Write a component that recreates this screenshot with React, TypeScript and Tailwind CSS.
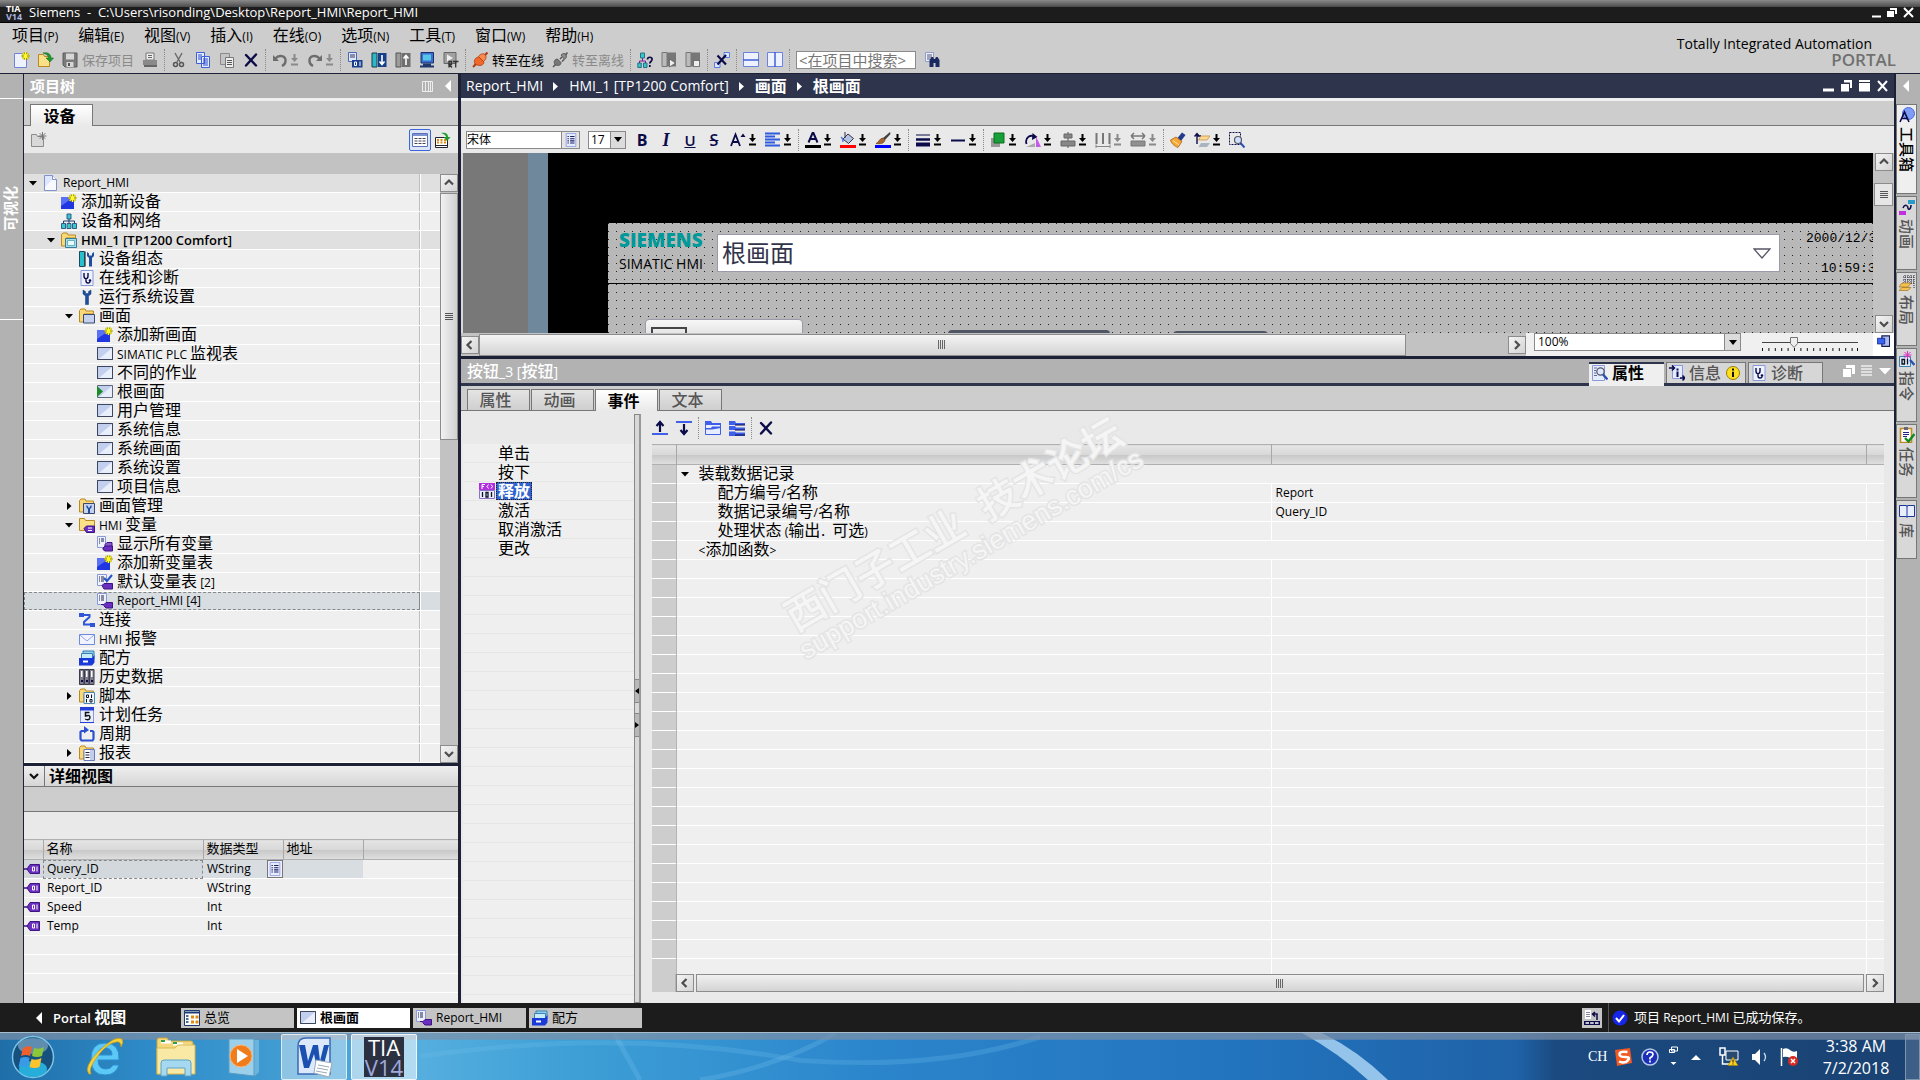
import type { ReactNode } from 'react'

const NAVY = '#0b0b4a'

const star = (
  <g>
    <path d="M11.500 0v8M7.500 4h8M8.700 1.200l5.600 5.600M14.300 1.200L8.700 6.800" stroke="#8a8410" strokeWidth="2" />
    <path d="M11.500 0v8M7.500 4h8M8.700 1.200l5.600 5.600M14.300 1.200L8.700 6.800" stroke="#fff82a" strokeWidth="1.200" />
  </g>
)

const folder = <path d="M.5 14V2.5L2 1h4l1 2h7.500v3H5v8z" fill="#f8d878" stroke="#b98a22" />

const tag = (
  <g>
    <path d="M8 8.500l2-2h5v5H8z" fill="#8a5ad0" stroke="#3c1580" />
    <path d="M6 12l2-2h7.500v5H8l-2-1.500z" fill="#6a2fc0" stroke="#3c1580" />
  </g>
)

const ICONS: Record<string, ReactNode> = {
  newProject: (
    <>
      <path d="M.5 1.500h8l4 4v10H.5z" fill="#eef2ff" stroke="#6f83d8" />
      {star}
    </>
  ),
  open: (
    <>
      <path d="M.5 14.500V2.500h5l1 2h5v10z" fill="#fbe08a" stroke="#b98a22" />
      <path d="M5 1c5-1 8 1 8 5h2.500L12 10 8 6h2.500C10.500 3 8 2 5 1z" fill="#1d9a2c" stroke="#0d5e18" strokeWidth=".5" />
    </>
  ),
  save: (
    <>
      <path d="M1 1h14v14H3l-2-2z" fill="#7b7b7b" stroke="#5d5d5d" />
      <path d="M4 1.500h8v6H4zM4.500 10h7v5h-7z" fill="#d6d6d6" />
      <path d="M6 11h2v3H6z" fill="#555" />
    </>
  ),
  print: (
    <>
      <path d="M4 1h8v7H4z" fill="#eee" stroke="#777" />
      <path d="M6 3.500h4M6 5.500h4" stroke="#666" />
      <path d="M1 8h14v5H1z" fill="#8a8a8a" />
      <path d="M2 13h13v2H2z" fill="#666" />
    </>
  ),
  cut: (
    <>
      <path d="M4 1l5 9M11 1L6 10" stroke="#6c6c6c" strokeWidth="1.500" fill="none" />
      <circle cx="4.500" cy="12.500" r="2" stroke="#555" strokeWidth="1.500" fill="none" />
      <circle cx="10.500" cy="12.500" r="2" stroke="#555" strokeWidth="1.500" fill="none" />
    </>
  ),
  copy: (
    <>
      <path d="M1.500.5h8v11h-8zM6.500 4.500h8v11h-8z" fill="#e6ecff" stroke="#3f5fd8" />
      <path d="M3 3h4M3 5h3M3 7h3M8 7h5M8 9h5M8 11h5M8 13h5" stroke="#2b48c8" />
    </>
  ),
  paste: (
    <>
      <path d="M1.500 1.500h9v11h-9z" fill="#c4c4c4" stroke="#8a8a8a" />
      <path d="M6.500 5.500h8v10h-8z" fill="#eee" stroke="#777" />
      <path d="M8 8.500h5M8 10.500h5M8 12.500h5" stroke="#555" />
    </>
  ),
  x: <path d="M3 3l10 10.500M13 2.500L3 13.500" stroke={NAVY} strokeWidth="2.400" strokeLinecap="round" />,
  undo: (
    <>
      <path d="M1 3v6h6z" fill="#6d6d6d" />
      <path d="M3.500 6.500C7 2 14 4 13.500 9c0 2-1.500 4-3.500 5" stroke="#6d6d6d" strokeWidth="2.400" fill="none" />
    </>
  ),
  redo: (
    <>
      <path d="M15 3v6H9z" fill="#6d6d6d" />
      <path d="M12.500 6.500C9 2 2 4 2.500 9c0 2 1.500 4 3.500 5" stroke="#6d6d6d" strokeWidth="2.400" fill="none" />
    </>
  ),
  compile: (
    <>
      <path d="M1.500.5h8v9h-8z" fill="#dfe8ff" stroke="#4767b8" />
      <path d="M3 3h5M3 5h5" stroke="#335" />
      <path d="M5 8h10.500v7.500H5z" fill="#1b3f8f" />
      <path d="M7.500 10v3.500h2V10zM13 9.500v4.500" stroke="#fff" fill="none" />
    </>
  ),
  download: (
    <>
      <path d="M1 1h5v14H1z" fill="#2bb9c9" stroke="#1a3a4a" />
      <path d="M7 1h8.500v14H7z" fill="#173f8a" />
      <path d="M11 3v9M8.500 9.500L11 12.500l2.500-3" stroke="#fff" strokeWidth="1.600" fill="none" />
    </>
  ),
  upload: (
    <>
      <path d="M1 1h5v14H1z" fill="#9c9c9c" stroke="#555" />
      <path d="M7 1h8.500v14H7z" fill="#6f6f6f" />
      <path d="M11 13V4M8.500 6.500L11 3.500l2.500 3" stroke="#fff" strokeWidth="1.600" fill="none" />
    </>
  ),
  simulate: (
    <>
      <path d="M2 .5h12.500v10.500H2z" fill="#3a6fd0" stroke="#17326e" />
      <path d="M4 2.500h8v6H4z" fill="#55c5e8" />
      <path d="M4 11.500h8v2H4zM1 13.500h14v2H1z" fill="#20376e" />
    </>
  ),
  runtime: (
    <>
      <path d="M1 .5h12v11H1z" fill="#a0a0a0" stroke="#666" />
      <path d="M4 2.500l6 3.500-6 3.500z" fill="#eee" />
      <path d="M6 15.500v-6h2.500v3H6l3 3M10 9.500h5.500M12.700 9.500v6" stroke="#333" strokeWidth="1.300" fill="none" />
    </>
  ),
  plug: (
    <>
      <path d="M1 15l3-3" stroke="#b03a10" strokeWidth="2" />
      <path d="M3 12c-2-4 1-7 4-7l5 5c0 3-4 5-9 2z" fill="#f0682a" stroke="#a83208" strokeWidth=".7" />
      <path d="M6.500 4.500C8 2 11 1 13 2.500c2 2 1 5-1.500 7z" fill="#f78a4c" stroke="#a83208" strokeWidth=".7" />
      <path d="M13 3l2.500-2.500" stroke="#b03a10" strokeWidth="2" />
    </>
  ),
  unplug: (
    <>
      <path d="M1 15l3-3M8 7l2-2M10 9.500l2-2" stroke="#555" strokeWidth="1.500" />
      <path d="M3 12.500C1 9.500 3 7 5.500 7L9 10.500c0 3-3 4-6 2z" fill="#777" stroke="#444" strokeWidth=".7" />
      <path d="M9 3c2-2 4-2 5-.5 1 1.500.5 3.500-1.500 5z" fill="#8c8c8c" stroke="#444" strokeWidth=".7" />
      <path d="M13.500 3L15.500.5" stroke="#555" strokeWidth="1.500" />
    </>
  ),
  accessible: (
    <>
      <path d="M3.500 1h4v5h-4z" fill="#35c5cf" stroke="#175e70" strokeWidth=".8" />
      <path d="M5.500 6v3M2.500 11V9h6v2" stroke="#7a1fa0" fill="none" />
      <path d="M.8 11h3.500v4.500H.8zM6.500 11H10v4.500H6.500z" fill="#35c5cf" stroke="#175e70" strokeWidth=".8" />
      <path d="M10.500 7.500c0-3 5-3 4.500 0 0 2-2.200 2-2.200 4M12.800 13v2" stroke={NAVY} strokeWidth="1.700" fill="none" />
    </>
  ),
  start: (
    <>
      <path d="M1 .5h5v14H1z" fill="#bbb" stroke="#777" />
      <path d="M6 .5h9v14H6z" fill="#777" />
      <path d="M8.500 7l6 4-6 4z" fill="#eee" stroke="#444" strokeWidth=".6" />
    </>
  ),
  stop: (
    <>
      <path d="M1 .5h5v14H1z" fill="#bbb" stroke="#777" />
      <path d="M6 .5h9v14H6z" fill="#777" />
      <path d="M8.500 8.500h6v6h-6z" fill="#eee" stroke="#444" strokeWidth=".6" />
    </>
  ),
  crossRef: (
    <>
      <path d="M10 .5h5.500v5H10zM.5 10.500H6v5H.5z" fill="#dfe6ff" stroke="#5a7be0" />
      <path d="M3.500 3.500l8.500 9M12 3L3.500 12.500" stroke={NAVY} strokeWidth="2.200" />
    </>
  ),
  splitH: (
    <>
      <path d="M.5.5h15v14H.5z" fill="#eef2ff" stroke="#6b83e0" />
      <path d="M0 8h16" stroke="#3f5fd8" strokeWidth="1.500" />
    </>
  ),
  splitV: (
    <>
      <path d="M.5.5h15v14H.5z" fill="#eef2ff" stroke="#6b83e0" />
      <path d="M8 0v15" stroke="#3f5fd8" strokeWidth="1.500" />
    </>
  ),
  find: (
    <>
      <path d="M1.500.5h8v9h-8z" fill="#eef2ff" stroke="#8d9ccc" />
      <path d="M3 3h5M3 5h5M3 7h3" stroke="#557" />
      <path d="M5.500 8l2-3h1.500l1 2h1l1-2h1.500l2 3v7h-4v-4h-2v4h-4z" fill="#1a2a60" />
    </>
  ),
  newFolder: (
    <>
      <path d="M.5 14.500V2.500h5l1 2h6v10z" fill="#d8d8d8" stroke="#8b8b8b" />
      <path d="M11.500 0v8M7.500 4h8M8.700 1.200l5.600 5.600M14.300 1.200L8.700 6.800" stroke="#777" />
    </>
  ),
  grid: (
    <>
      <path d="M.5 1.500h15v13H.5z" fill="#fff" stroke="#5b72b8" />
      <path d="M1 3h14" stroke="#7f92d0" strokeWidth="2" />
      <path d="M2.500 6.500h3M6.500 6.500h3M10.500 6.500h3M2.500 9h3M6.500 9h3M10.500 9h3M2.500 11.500h3M6.500 11.500h3M10.500 11.500h3" stroke="#445" />
    </>
  ),
  overview: (
    <>
      <path d="M.5 5.500h12v10H.5z" fill="#fff" stroke="#223" />
      <path d="M2 8h2M5.500 8h2M9 8h2M2 10.500h2M5.500 10.500h2M9 10.500h2" stroke="#e08a10" strokeWidth="2" />
      <path d="M1 13.500h11" stroke="#223" />
      <path d="M6 1c5-1 7 1 7 4h2.500L12 9 8.500 5H11C11 3 9 2 6 1z" fill="#1d9a2c" />
    </>
  ),
  page: (
    <>
      <path d="M1.500.5h8l4 4v11h-12z" fill="#dfe7ff" stroke="#7f93c8" />
      <path d="M2 12l9-9 2 2v10H2z" fill="#f8faff" />
      <path d="M9.500.5v4h4" fill="#fff" stroke="#7f93c8" />
    </>
  ),
  addNew: (
    <>
      <path d="M0 3h13v12H0z" fill="#2036e0" />
      <path d="M0 15V3h13L0 12z" fill="#5a70f5" />
      {star}
    </>
  ),
  network: (
    <>
      <path d="M6 1h4v5H6zM.5 10.500h4v5h-4zM6 10.500h4v5H6zM11.500 10.500h4v5h-4z" fill="#38c8cf" stroke="#1c3c6e" strokeWidth=".8" />
      <path d="M8 6v4M2.500 10V8h11v2" stroke="#1c3c6e" fill="none" />
    </>
  ),
  device: (
    <>
      {folder}
      <path d="M4.500 6.500h11v9h-11z" fill="#9fe0ea" stroke="#3a7a94" />
      <path d="M6.500 8.500h7v5h-7z" fill="#e8fbff" stroke="#6ab0c0" />
    </>
  ),
  config: (
    <>
      <path d="M.5.5h5v15h-5z" fill="#25c0cc" stroke="#20485a" />
      <path d="M6 .5h1v15H6z" fill="#777" />
      <path d="M8 1v4l2 2v8.500h3V7l2-2V1l-2 1.500v2h-3v-2z" fill="#1d4f9e" />
    </>
  ),
  diagnose: (
    <>
      <path d="M2 .5h12v15H2z" fill="#eef2ff" stroke="#8a9ad8" />
      <path d="M5 3v3c0 3.500 4 3.500 4 0V3M7 9v2c0 2.500 4 2.500 4 .5" stroke={NAVY} strokeWidth="1.400" fill="none" />
      <circle cx="11" cy="10.500" r="1.300" fill={NAVY} />
    </>
  ),
  wrench: <path d="M4 1v4l2.500 2v8.500h3V7L12 5V1L9.500 2.500v2h-3v-2z" fill="#1d4f9e" stroke="#123a78" strokeWidth=".5" />,
  screens: (
    <>
      {folder}
      <path d="M4.500 6.500h11v8.500h-11z" fill="#c4d2f0" stroke="#3a4a70" />
    </>
  ),
  screen: (
    <>
      <path d="M.5 1.500h15v12H.5z" fill="#c3cfee" stroke="#3c465e" />
      <path d="M15 2v11H2z" fill="#e9eefb" />
      <path d="M.5 1.500h15v12H.5z" stroke="#3c465e" />
    </>
  ),
  rootScreen: (
    <>
      <path d="M.5 1.500h15v12H.5z" fill="#c3cfee" />
      <path d="M15 2v11H2z" fill="#e9eefb" />
      <path d="M.5 1.500h15v12H.5z" stroke="#5c667e" />
      <path d="M0 2l6 5.500L0 13z" fill="#1d8a2c" />
    </>
  ),
  screenMgmt: (
    <>
      {folder}
      <path d="M4.500 5.500h11v10h-11z" fill="#c4d2f0" stroke="#3a4a70" />
      <path d="M7.500 7v2.500l1.500 1.500v4h2v-4l1.500-1.500V7L11 8.200v1.300H9V8.200z" fill="#1d4f9e" />
    </>
  ),
  tagFolder: (
    <>
      <path d="M.5 13.500V1.500h5l1 2h9v10z" fill="#fbe08a" stroke="#b98a22" />
      <path d="M5 11.500L7.500 9h8v6.500h-8z" fill="#6a2fc0" stroke="#3c1580" />
      <path d="M9 11h4M9 13.500h4" stroke="#fff" />
    </>
  ),
  tags: (
    <>
      <path d="M.5.5h8v11h-8z" fill="#eef2ff" stroke="#8a9ad8" />
      <path d="M2 3h1M4 3h3M2 5h1M4 5h3M2 7h1" stroke="#224" />
      {tag}
    </>
  ),
  tagDefault: (
    <>
      <path d="M.5.5h9v11h-9z" fill="#eef2ff" stroke="#8a9ad8" />
      <path d="M2 3h1M4 3h3M2 5h1M4 5h3M2 7h1M4 7h3" stroke="#224" />
      <path d="M7 4l3 3 5-6" stroke="#2450c8" strokeWidth="2" fill="none" />
      <path d="M5 11.500L7 9.500h8.500v5.500H7z" fill="#6a2fc0" stroke="#3c1580" />
    </>
  ),
  tagTable: (
    <>
      <path d="M.5.5h9v11h-9z" fill="#eef2ff" stroke="#8a9ad8" />
      <path d="M2 3h1M4 3h3M2 5h1M4 5h3M2 7h1M4 7h3" stroke="#224" />
      <path d="M4 11.500h3L9 9.500h6.500v5.500H9l-2-2" fill="#6a2fc0" stroke="#3c1580" />
    </>
  ),
  connection: (
    <>
      <path d="M0 1h5v4H0zM11 11h5v4h-5z" fill="#2f55d8" />
      <path d="M4 3h6.500v2L5 10v2.500h7" stroke="#2f55d8" strokeWidth="2" fill="none" />
    </>
  ),
  mail: (
    <>
      <path d="M.5 3.500h15v10H.5z" fill="#f1f4ff" stroke="#6c8ae0" />
      <path d="M1 4l7 6 7-6" stroke="#8fa6ea" fill="none" />
    </>
  ),
  recipe: (
    <>
      <path d="M4 1h11v8H4z" fill="#8fd0ee" stroke="#3a80b0" />
      <path d="M2.500 3.500h11V10h-11z" fill="#c6ecfa" stroke="#3a80b0" />
      <path d="M0 8h13l2.500-3v7.500L13 15.500H0z" fill="#1a3ad8" />
      <path d="M4 10.500h5v2H4z" fill="#fff" />
    </>
  ),
  history: (
    <>
      <path d="M.5.500h4.500v15H.5zM5.500.500H10v15H5.500zM10.500.500H15v15h-4.500z" fill="#7e7e8e" stroke="#3b3b4a" />
      <path d="M2 2h1.500v6H2zM7 2h1.500v6H7zM12 2h1.500v6H12z" fill="#fff" />
      <path d="M2 11h2v2H2zM7 11h2v2H7zM12 11h2v2h-2z" fill={NAVY} />
    </>
  ),
  script: (
    <>
      {folder}
      <path d="M5 4.500h10.500v11H5z" fill="#eef6ff" stroke="#4a88b0" />
      <path d="M7.500 7h2v2.500h-2zM12.500 6.500v3.500M7.500 11v3.500M11 11.500h2V14h-2z" stroke="#112" fill="none" />
    </>
  ),
  calendar: (
    <>
      <path d="M1.500.5h13v15h-13z" fill="#e9eeff" stroke="#8a9ad8" />
      <path d="M1 0h14v3.500H1zM1 15h14v1H1z" fill="#2440d8" />
      <path d="M10.500 5.500H6.500V9c4-1.500 5 0 4.200 2.500-.7 1.500-3 1.500-4.500.5" stroke="#111" strokeWidth="1.500" fill="none" />
    </>
  ),
  cycle: (
    <>
      <path d="M5 5H2.500L1.500 6v7l1 1.500h11l1-1.500V6l-1-1H11" stroke="#2b50d0" strokeWidth="2.200" fill="none" />
      <path d="M5 0l5 4-5 3.500z" fill="#2b50d0" />
    </>
  ),
  report: (
    <>
      {folder}
      <path d="M5 4.500h10.500v11H5z" fill="#fff" stroke="#6a7ac0" />
      <path d="M6.500 7.500h4M6.500 10h4M6.500 12.500h4" stroke="#224" />
      <path d="M12 5v10M14 5v10" stroke="#8a9ad8" />
    </>
  ),
  list: (
    <>
      <path d="M2.500.5h11v15h-11z" fill="#e6ecff" stroke="#8d9ee0" />
      <path d="M4 4h1.500M7 4h5M4 6.500h1.500M7 6.500h5M4 9h1.500M7 9h5M4 11.500h1.500M7 11.500h5" stroke="#1b1b5a" strokeWidth="1.200" />
    </>
  ),
  varTag: (
    <>
      <path d="M0 8h4" stroke="#3c1580" strokeWidth="1.500" />
      <path d="M3 8l3-4.500h9.500v9H6z" fill="#6a2fc0" stroke="#3c1580" />
      <path d="M8.500 6v4h2V6zM13 5.500v5" stroke="#fff" fill="none" />
    </>
  ),
  fontUp: (
    <>
      <path d="M1 14L5.500 2.500 10 14M2.800 10h5.400" stroke={NAVY} strokeWidth="1.800" fill="none" />
      <path d="M10.500 5L13 1.500 15.500 5z" fill={NAVY} />
    </>
  ),
  alignLeft: <path d="M0 1.500h15M0 4.500h10M0 7.500h15M0 10.500h10M0 13.500h15" stroke="#2f5be0" strokeWidth="1.800" />,
  fontColor: (
    <>
      <path d="M3.500 10.500L8 0l4.500 10.500M5 7h6" stroke={NAVY} strokeWidth="2" fill="none" />
      <path d="M0 13h16v3H0z" fill="#000" />
    </>
  ),
  fill: (
    <>
      <path d="M3 7l5-5 5.500 4.500-5 5z" fill="#b4c2e4" stroke="#334" />
      <path d="M5 0v6" stroke="#334" />
      <path d="M1 5c1 1 2 1 2 5" stroke="#5a7be0" strokeWidth="1.500" fill="none" />
      <path d="M0 13h16v3H0z" fill="#f00" />
    </>
  ),
  brushBlue: (
    <>
      <path d="M15 0L8 6l2 2 5.500-6z" fill="#444" />
      <path d="M8 6l2 2c-1 4-5 4-9 3.500 3-1 3-5 7-5.500z" fill="#a5642c" stroke="#5a2f0c" strokeWidth=".6" />
      <path d="M0 13h16v3H0z" fill="#00f" />
    </>
  ),
  lineWidth: (
    <>
      <path d="M1 3h14" stroke={NAVY} strokeWidth="1" />
      <path d="M1 7.500h14" stroke={NAVY} strokeWidth="2.500" />
      <path d="M1 12.500h14" stroke={NAVY} strokeWidth="4" />
    </>
  ),
  line: <path d="M1 8.500h14" stroke={NAVY} strokeWidth="2" />,
  order: (
    <>
      <path d="M1 6h9v9H1z" fill="#999" />
      <path d="M4 1h10v10H4z" fill="#18a038" stroke="#0c6a20" />
    </>
  ),
  rotate: (
    <>
      <path d="M1.500 12C-.5 5 6 2 10 5" stroke={NAVY} strokeWidth="1.800" fill="none" />
      <path d="M7.500 1l5 4-5.500 3z" fill={NAVY} />
      <path d="M11 4.500V15h5z" fill="#c65ae8" />
      <path d="M1 15l9-4v4z" fill="#aaa" />
    </>
  ),
  center: (
    <>
      <path d="M8 0v16" stroke="#555" />
      <path d="M4 2h8v4H4zM1 9h14v5H1z" fill="#868686" stroke="#666" />
    </>
  ),
  distribute: (
    <>
      <path d="M1.500 1v11M8 1v11M14.500 1v11" stroke="#777" strokeWidth="2" />
      <path d="M1 14.500h14M1 12.500v3.500M15 12.500v3.500" stroke="#888" />
    </>
  ),
  sameWidth: (
    <>
      <path d="M1 4h14M1 4l3-3M1 4l3 3M15 4l-3-3M15 4l-3 3" stroke="#777" strokeWidth="1.500" fill="none" />
      <path d="M1 9h14v5H1z" fill="#909090" stroke="#777" />
    </>
  ),
  formatBrush: (
    <>
      <path d="M12 .5L15.500 3 11 9 7.500 6z" fill="#243a8c" />
      <path d="M6 5l6 4.500L8 15.500C4 14 1 11 .5 8z" fill="#f4a836" stroke="#a05a10" strokeWidth=".7" />
      <path d="M3 8.500l6 4.500" stroke="#fce0a0" />
    </>
  ),
  layerUp: (
    <>
      <path d="M3 12V2M.5 4.500L3 1.500l2.500 3M3 4h4" stroke={NAVY} strokeWidth="1.400" fill="none" />
      <path d="M7 4h9l-3 4H4.500z" fill="#fbd89a" stroke="#c48a30" strokeWidth=".7" />
      <path d="M7 11h9l-3 4H4.500z" fill="#a9b4c0" />
    </>
  ),
  zoomSel: (
    <>
      <path d="M.5.5h11v12H.5z" fill="none" stroke={NAVY} strokeDasharray="2 1" />
      <circle cx="9" cy="8" r="3.500" fill="#cfe0ff" stroke="#556" strokeWidth="1.200" />
      <path d="M11.500 11l4 4.500" stroke="#2b50b0" strokeWidth="2" />
    </>
  ),
  moveUp: (
    <>
      <path d="M8 12V3M4.500 6L8 2l3.500 4" stroke={NAVY} strokeWidth="2.200" fill="none" />
      <path d="M0 14h16" stroke="#3f5fe8" strokeWidth="2" />
    </>
  ),
  moveDown: (
    <>
      <path d="M8 4v9M4.500 10L8 14l3.500-4" stroke={NAVY} strokeWidth="2.200" fill="none" />
      <path d="M0 2h16" stroke="#3f5fe8" strokeWidth="2" />
    </>
  ),
  groupA: (
    <>
      <path d="M.5 14.500V1.500h5l1 2h9v11z" fill="#e8edff" stroke="#3f5fe8" />
      <path d="M0 1h6l1 2h9v2H0zM0 8h6l1-1.500h9v1.500L7 9.500H0z" fill="#3f5fe8" />
    </>
  ),
  groupB: (
    <>
      <path d="M0 1h6l1 2h9v2H0zM0 6h6l1 1.500h9V10H0zM0 11.500h6l1 1h9V16H0z" fill="#3f5fe8" />
      <path d="M6 5h10M6 10h10M6 15h10" stroke={NAVY} />
    </>
  ),
  event: (
    <>
      <path d="M0 0h16v7H0z" fill="#b030e0" />
      <path d="M3 6V1.500h3M3 3.500h2M9.500 1.500l-1.500 2 1.500 2M12 1.500l1.500 2-1.500 2" stroke="#fff" fill="none" />
      <path d="M.5 7.500h15v8H.5z" fill="#e8edff" stroke="#8a70c0" />
      <path d="M3.500 9v5M7 9.500h2V14H7zM12.500 9v5" stroke="#112" strokeWidth="1.300" fill="none" />
    </>
  ),
  props: (
    <>
      <path d="M.5.5h12v15H.5z" fill="#e6ecff" stroke="#8a9ad8" />
      <path d="M2 3h3M2 5.500h2M2 8h2M2 10.500h3" stroke="#668" />
      <circle cx="8.500" cy="6.500" r="3.700" fill="#dce8ff" stroke="#556" strokeWidth="1.300" />
      <path d="M11 9.500l4.500 5" stroke="#2b50b0" strokeWidth="2.400" />
    </>
  ),
  info: (
    <>
      <path d="M3.500.5h10v13h-10z" fill="#e6ecff" stroke="#8a9ad8" />
      <path d="M0 3h5M3 .5L5.500 3 3 5.500M16 13h-5M13.500 10.500L16 13l-2.500 2.500" stroke={NAVY} strokeWidth="1.500" fill="none" />
      <path d="M8.500 3.500v2M8.500 6.500V12" stroke={NAVY} strokeWidth="2" />
    </>
  ),
  infoYellow: (
    <>
      <circle cx="8" cy="8" r="6.500" fill="#ffe020" stroke="#9a8000" />
      <path d="M8 3.500v2M8 6.800v5.200" stroke="#111" strokeWidth="2" />
    </>
  ),
  toolbox: (
    <>
      <circle cx="9.500" cy="6.500" r="6" fill="#7f9df5" stroke="#4a6ae0" />
      <path d="M1 15L5.500 5 10 15M2.800 11.500h5.400" stroke={NAVY} strokeWidth="1.600" fill="none" />
    </>
  ),
  animation: (
    <>
      <path d="M9 1h7v4H9z" fill="#2a9ac8" />
      <path d="M0 12h7v4H0z" fill="#c030e0" />
      <path d="M4 9c2-5 5-2 5 0s3 2 3-3" stroke={NAVY} strokeWidth="1.500" fill="none" />
    </>
  ),
  layout: (
    <>
      <path d="M4 2h12M4 5h12M4 8h12M6 0v10M9 0v10M12 0v10M15 0v14" stroke="#223" strokeDasharray="1 1" />
      <path d="M0 12l3-4h9l-3 4zM0 15.500l3-3h9l-3 3z" fill="#f4c050" stroke="#9a6a10" strokeWidth=".6" />
    </>
  ),
  instructions: (
    <>
      <path d="M.5 5.500h11v10H.5z" fill="#dcecff" stroke="#3a80b0" />
      <path d="M3 8.500h2.500V13H3zM8.500 8v5.500" stroke="#111" strokeWidth="1.300" fill="none" />
      <path d="M8.500 0v8M4.500 4h8M5.500 1l6 6M11.500 1l-6 6" stroke="#e030c0" />
      <path d="M11 9l4.500 5" stroke="#2b50b0" strokeWidth="2.400" />
    </>
  ),
  tasks: (
    <>
      <path d="M1.500 1.500h11v14h-11z" fill="#fff" stroke="#c08a20" strokeWidth="1.600" />
      <path d="M5 0h4v3H5z" fill="#667" />
      <path d="M4 5.500h6M4 7.500h6M4 9.500h4" stroke="#228" />
      <path d="M6 11l3.500 3.500L15.500 7" stroke="#128a20" strokeWidth="2.400" fill="none" />
    </>
  ),
  book: (
    <>
      <path d="M.5 2.500h7l.5 1 .5-1h7v11h-7l-.5 1-.5-1h-7z" fill="#e9eeff" stroke="#1a3a9a" />
      <path d="M8 3v11" stroke="#1a3a9a" />
    </>
  ),
  portalOverview: (
    <>
      <path d="M.5.5h15v15H.5z" fill="#fff" stroke="#1a3a70" />
      <path d="M1 2.500h14" stroke="#1a3a70" strokeWidth="2" />
      <path d="M2 6h2.500M2 9h2.500M2 12h2.500" stroke="#1a3a70" strokeWidth="1.500" />
      <path d="M7 7h3M11.500 7h3M7 12h3M11.500 12h3" stroke="#e08a10" strokeWidth="3" />
    </>
  ),
  editors: (
    <>
      <path d="M1 0h6v9H1z" fill="#fff" />
      <path d="M2 2.500h4M2 4.500h4M2 6.500h4" stroke="#88a" />
      <path d="M9 4h4v6M11 2L8.500 4l2.500 2.500" stroke={NAVY} strokeWidth="1.500" fill="none" />
      <path d="M0 11h16v4H0z" fill={NAVY} />
      <path d="M1.500 13h3.500M6.200 13h3.500M11 13h3.500" stroke="#fff" strokeWidth="1.500" />
    </>
  ),
  ok: (
    <>
      <circle cx="8" cy="8" r="7.500" fill="#1526e8" />
      <path d="M4 8l3 3.500L12 5" stroke="#fff" strokeWidth="2" fill="none" />
    </>
  ),
  layers: (
    <>
      <path d="M6 1h9.500v13H6z" fill="#aebcf0" stroke="#141e50" strokeWidth="1.500" />
      <path d="M.5 4h9v7h-9z" fill="#3565f0" stroke="#141e90" />
    </>
  ),
}

function Icon({ name, size = 16 }: { name: string; size?: number }) {
  return (
    <svg viewBox="0 0 16 16" width={size} height={size} fill="none" className="shrink-0">
      {ICONS[name]}
    </svg>
  )
}

// Chinese runs are set larger than the Latin text beside them
function Txt({ children, small }: { children: string; small?: boolean }) {
  const parts = children.split(/([\u3000-\u9fff]+)/).filter(Boolean)
  return (
    <span className="whitespace-pre">
      {parts.map((p, i) => (
        <span key={i} className={/[\u3000-\u9fff]/.test(p) ? (small ? 'text-[13px]' : 'text-[16px]') : ''}>
          {p}
        </span>
      ))}
    </span>
  )
}

const Sep = () => <span className="-mx-0.5 h-[22px] border-l border-dotted border-[#8a8a8a]" />

function ToolButton({ icon, label, disabled }: { icon: string; label?: string; disabled?: boolean }) {
  return (
    <button aria-label={label ? undefined : icon} className="flex items-center gap-1 shrink-0">
      <Icon name={icon} />
      {label && <span className={disabled ? 'text-[13px] text-[#8a8a8a]' : 'text-[13px]'}>{label}</span>}
    </button>
  )
}

function DropMark({ color = '#000' }: { color?: string }) {
  return (
    <svg viewBox="0 0 9 12" width="9" height="12" className="shrink-0">
      <path d="M3.500 0h2v4H8L4.500 8 1 4h2.500zM1 9.500h7v2H1z" fill={color} />
    </svg>
  )
}

function DropButton({ icon, disabled }: { icon: string; disabled?: boolean }) {
  return (
    <button aria-label={icon} className="flex items-center gap-0.5 shrink-0">
      <Icon name={icon} />
      <DropMark color={disabled ? '#8a8a8a' : '#000'} />
    </button>
  )
}

const chevrons = {
  up: 'M2 7.500l4-4 4 4',
  down: 'M2 4l4 4 4-4',
  left: 'M7.500 2l-4 4 4 4',
  right: 'M4 2l4 4-4 4',
}

function ScrollButton({ dir }: { dir: keyof typeof chevrons }) {
  return (
    <button
      aria-label={dir}
      className="flex size-[18px] shrink-0 items-center justify-center border border-[#8c8c8c] bg-linear-to-br from-[#f4f4f4] to-[#d4d4d4]"
    >
      <svg viewBox="0 0 12 12" width="12" height="12">
        <path d={chevrons[dir]} fill="none" stroke="#4c4c4c" strokeWidth="2.200" />
      </svg>
    </button>
  )
}

const GripH = () => (
  <svg viewBox="0 0 8 9" width="8" height="9">
    <path d="M.5 0v9M2.500 0v9M4.500 0v9M6.500 0v9" stroke="#666" />
  </svg>
)

const GripV = () => (
  <svg viewBox="0 0 8 8" width="8" height="8">
    <path d="M0 .5h8M0 2.500h8M0 4.500h8M0 6.500h8" stroke="#555" />
  </svg>
)

type Node = { lv: number; icon: string; text: string; arrow?: 'open' | 'closed'; head?: boolean; selected?: boolean }

const TREE: Node[] = [
  { lv: 0, icon: 'page', text: 'Report_HMI', arrow: 'open', head: true },
  { lv: 1, icon: 'addNew', text: '添加新设备' },
  { lv: 1, icon: 'network', text: '设备和网络' },
  { lv: 1, icon: 'device', text: 'HMI_1 [TP1200 Comfort]', arrow: 'open', head: true },
  { lv: 2, icon: 'config', text: '设备组态' },
  { lv: 2, icon: 'diagnose', text: '在线和诊断' },
  { lv: 2, icon: 'wrench', text: '运行系统设置' },
  { lv: 2, icon: 'screens', text: '画面', arrow: 'open' },
  { lv: 3, icon: 'addNew', text: '添加新画面' },
  { lv: 3, icon: 'screen', text: 'SIMATIC PLC 监视表' },
  { lv: 3, icon: 'screen', text: '不同的作业' },
  { lv: 3, icon: 'rootScreen', text: '根画面' },
  { lv: 3, icon: 'screen', text: '用户管理' },
  { lv: 3, icon: 'screen', text: '系统信息' },
  { lv: 3, icon: 'screen', text: '系统画面' },
  { lv: 3, icon: 'screen', text: '系统设置' },
  { lv: 3, icon: 'screen', text: '项目信息' },
  { lv: 2, icon: 'screenMgmt', text: '画面管理', arrow: 'closed' },
  { lv: 2, icon: 'tagFolder', text: 'HMI 变量', arrow: 'open' },
  { lv: 3, icon: 'tags', text: '显示所有变量' },
  { lv: 3, icon: 'addNew', text: '添加新变量表' },
  { lv: 3, icon: 'tagDefault', text: '默认变量表 [2]' },
  { lv: 3, icon: 'tagTable', text: 'Report_HMI [4]', selected: true },
  { lv: 2, icon: 'connection', text: '连接' },
  { lv: 2, icon: 'mail', text: 'HMI 报警' },
  { lv: 2, icon: 'recipe', text: '配方' },
  { lv: 2, icon: 'history', text: '历史数据' },
  { lv: 2, icon: 'script', text: '脚本', arrow: 'closed' },
  { lv: 2, icon: 'calendar', text: '计划任务' },
  { lv: 2, icon: 'cycle', text: '周期' },
  { lv: 2, icon: 'report', text: '报表', arrow: 'closed' },
]

const MENU = ['项目(P)', '编辑(E)', '视图(V)', '插入(I)', '在线(O)', '选项(N)', '工具(T)', '窗口(W)', '帮助(H)']

const DETAILS = [
  ['Query_ID', 'WString'],
  ['Report_ID', 'WString'],
  ['Speed', 'Int'],
  ['Temp', 'Int'],
]

const EVENTS = ['单击', '按下', '释放', '激活', '取消激活', '更改']

const FUNCS = [
  { text: '装载数据记录', value: '', level: 0, open: true },
  { text: '配方编号/名称', value: 'Report', level: 1 },
  { text: '数据记录编号/名称', value: 'Query_ID', level: 1 },
  { text: '处理状态 (输出．可选)', value: '', level: 1 },
  { text: '<添加函数>', value: '', level: 0 },
]

function Arrow({ state }: { state?: 'open' | 'closed' }) {
  return (
    <svg viewBox="0 0 12 12" width="12" height="12" className="shrink-0">
      {state === 'open' && <path d="M2 4h8L6 8.500z" />}
      {state === 'closed' && <path d="M4 2l4.500 4L4 10z" />}
    </svg>
  )
}

function TitleBar() {
  return (
    <header className="flex h-[23px] shrink-0 items-end border-b border-black bg-[linear-gradient(#8a8a8a,#4a4a4a_7px,#1c1c1c_7px)] pl-1.5 text-white">
      <div className="flex h-[17px] w-[17px] flex-col text-[9px] leading-[8px] font-bold">
        <span>TIA</span>
        <span className="text-[#a9b4e0]">V14</span>
      </div>
      <h1 className="flex-1 pl-1.5 text-[13px] leading-5">
        Siemens&nbsp; -&nbsp; C:\Users\risonding\Desktop\Report_HMI\Report_HMI
      </h1>
      <div className="flex items-center gap-1.5 pr-1.5 pb-1">
        <button aria-label="Minimize"><svg width="10" height="11"><path d="M1 9.500h9" stroke="#fff" strokeWidth="2" /></svg></button>
        <button aria-label="Restore"><svg width="10" height="11"><path d="M0 4h7v6H0zM3 1h7v6H8V3H3z" fill="#fff" /></svg></button>
        <button aria-label="Close"><svg width="11" height="11"><path d="M1 1l9 9M10 1l-9 9" stroke="#fff" strokeWidth="2" /></svg></button>
      </div>
    </header>
  )
}

function MenuAndToolbar() {
  return (
    <div className="flex h-[51px] shrink-0 border-b border-[#1c2138] bg-[#cdcdcd]">
      <div className="flex-1">
        <nav className="flex h-[26px] items-center gap-5 pl-3">
          {MENU.map((m) => (
            <button key={m}><Txt>{m}</Txt></button>
          ))}
        </nav>
        <div className="flex h-[22px] items-center gap-2 pl-3.5">
          <ToolButton icon="newProject" />
          <ToolButton icon="open" />
          <ToolButton icon="save" label="保存项目" disabled />
          <ToolButton icon="print" />
          <Sep />
          <ToolButton icon="cut" />
          <ToolButton icon="copy" />
          <ToolButton icon="paste" />
          <ToolButton icon="x" />
          <Sep />
          <DropButton icon="undo" disabled />
          <DropButton icon="redo" disabled />
          <Sep />
          <ToolButton icon="compile" />
          <ToolButton icon="download" />
          <ToolButton icon="upload" />
          <ToolButton icon="simulate" />
          <ToolButton icon="runtime" />
          <Sep />
          <ToolButton icon="plug" label="转至在线" />
          <ToolButton icon="unplug" label="转至离线" disabled />
          <Sep />
          <ToolButton icon="accessible" />
          <ToolButton icon="start" />
          <ToolButton icon="stop" />
          <Sep />
          <ToolButton icon="crossRef" />
          <Sep />
          <ToolButton icon="splitH" />
          <ToolButton icon="splitV" />
          <Sep />
          <input
            aria-label="在项目中搜索"
            placeholder="<在项目中搜索>"
            className="h-[18px] w-[120px] border border-[#8a8a8a] bg-white px-0.5 text-[15px] leading-4 placeholder:text-[#777]"
          />
          <ToolButton icon="find" />
        </div>
      </div>
      <div className="pt-[11px] pr-6 text-right">
        <div className="pr-6 text-[14px] leading-5 font-medium">Totally Integrated Automation</div>
        <div className="-mt-1 text-[17px] leading-5 font-semibold text-[#707070]">PORTAL</div>
      </div>
    </div>
  )
}

function ProjectTree() {
  return (
    <aside className="flex w-[434px] shrink-0 flex-col bg-[#efefef]">
      <div className="flex h-6 shrink-0 items-center bg-[#b2b2b2] px-1.5 text-white">
        <h2 className="flex-1 text-[15px] font-bold">项目树</h2>
        <svg width="12" height="11" className="mr-2.5"><path d="M.5.500h10v10H.5zM3.500 0v10M6.500 0v10M8.500 0v10" stroke="#eee" fill="none" /></svg>
        <button aria-label="Collapse"><svg width="8" height="12"><path d="M7 0v12L1 6z" fill="#fff" /></svg></button>
      </div>
      <div className="h-[3px] shrink-0 bg-[#f0f0f0]" />
      <div className="flex h-[25px] shrink-0 items-end border-b border-[#777] bg-[#cdcdcd] pl-1.5">
        <button className="-mb-px h-[22px] w-[63px] border border-b-0 border-[#777] bg-linear-to-b from-white to-[#e9e9e9] pr-1 text-[16px] leading-[18px] font-semibold">
          设备
        </button>
      </div>
      <div className="flex h-[27px] shrink-0 items-center justify-between bg-[#e9e9e9] px-[7px]">
        <ToolButton icon="newFolder" />
        <div className="flex items-center gap-1">
          <button aria-label="Details" className="flex size-[22px] items-center justify-center rounded-xs border border-[#3a66d8] bg-[#dfe6fa]">
            <Icon name="grid" />
          </button>
          <ToolButton icon="overview" />
        </div>
      </div>
      <div className="h-[21px] shrink-0 bg-[#c2c2c2]" />
      <div className="flex shrink-0 bg-[#c2c2c2]">
        <ul className="flex-1">
          {TREE.map((n, i) => (
            <li
              key={i}
              className={
                'flex h-[19px] border-b border-white ' +
                (n.selected ? 'bg-[#d8dde2]' : n.head ? 'bg-[#e0e0e0]' : 'bg-[#efefef]')
              }
            >
              <div
                style={{ paddingLeft: 3 + n.lv * 18 }}
                className={
                  'flex flex-1 items-center gap-1 border-r ' +
                  (n.selected ? 'outline-1 -outline-offset-1 outline-dashed outline-[#888] border-[#888]' : 'border-[#bdbdbd]')
                }
              >
                <Arrow state={n.arrow} />
                <Icon name={n.icon} />
                <span className={n.lv === 1 && n.head ? 'text-[13px] font-semibold' : ''}>
                  <Txt>{n.text}</Txt>
                </span>
              </div>
              <div className="w-5 border-l border-white" />
            </li>
          ))}
        </ul>
        <div className="flex w-[18px] flex-col bg-[#c2c2c2]">
          <ScrollButton dir="up" />
          <div className="mt-px flex h-[247px] items-center justify-center border border-[#8c8c8c] bg-linear-to-r from-[#f2f2f2] to-[#d0d0d0]">
            <GripV />
          </div>
          <div className="flex-1" />
          <ScrollButton dir="down" />
        </div>
      </div>
      <div className="h-[3px] shrink-0 bg-[#1c2138]" />
      <div className="flex h-[21px] shrink-0 items-center border-b border-[#777] bg-linear-to-b from-[#efefef] to-[#d6d6d6]">
        <button aria-label="Toggle details" className="flex h-full w-[21px] items-center justify-center border-r border-[#777]">
          <svg width="10" height="7"><path d="M1 1l4 4 4-4" fill="none" stroke="#111" strokeWidth="2.200" /></svg>
        </button>
        <h2 className="pl-1 text-[16px] leading-5 font-bold">详细视图</h2>
      </div>
      <div className="h-[25px] shrink-0 border-b border-[#777] bg-[#cdcdcd]" />
      <div className="h-[27px] shrink-0 bg-[#e9e9e9]" />
      <div className="min-h-0 flex-1 overflow-hidden">
        <table className="w-full table-fixed border-collapse text-left">
          <colgroup>
            <col className="w-[19px]" />
            <col className="w-[160px]" />
            <col className="w-[80px]" />
            <col className="w-[80px]" />
            <col />
          </colgroup>
          <thead>
            <tr className="h-5 border-y border-[#b0b0b0] bg-[linear-gradient(#e4e4e4,#d8d8d8_50%,#c8c8c8_50%,#dedede)] align-top">
              <th className="border-r border-[#a8a8a8]" />
              <th className="border-r border-[#a8a8a8] pl-[3px] text-[13px] leading-4 font-normal">名称</th>
              <th className="border-r border-[#a8a8a8] pl-[3px] text-[13px] leading-4 font-normal">数据类型</th>
              <th className="border-r border-[#a8a8a8] pl-[3px] text-[13px] leading-4 font-normal">地址</th>
              <th />
            </tr>
          </thead>
          <tbody>
            {DETAILS.map(([name, type], i) => (
              <tr key={name} className="h-[19px] border-b border-white leading-[18px]">
                <td className={i === 0 ? 'bg-[#d3d8dc]' : ''}><Icon name="varTag" /></td>
                <td className={i === 0 ? 'bg-[#d3d8dc] pl-1 outline-1 -outline-offset-1 outline-dashed outline-[#888]' : 'pl-1'}>{name}</td>
                <td className={i === 0 ? 'bg-[#d8dde2] pl-1' : 'pl-1'}>
                  <div className="flex items-center justify-between">
                    {type}
                    {i === 0 && (
                      <button aria-label="Select type" className="flex h-[18px] w-4 items-center justify-center border border-[#777] bg-[#eef]">
                        <Icon name="list" size={14} />
                      </button>
                    )}
                  </div>
                </td>
                <td className={i === 0 ? 'bg-[#d8dde2]' : ''} />
                <td />
              </tr>
            ))}
            {Array.from({ length: 4 }, (_, i) => (
              <tr key={i} className="h-[19px] border-b border-white"><td colSpan={5} /></tr>
            ))}
          </tbody>
        </table>
      </div>
    </aside>
  )
}

function Crumbs() {
  return (
    <div className="flex h-6 shrink-0 items-center bg-[#2d344c] pr-1.5 pl-[5px] text-white">
      <nav className="flex flex-1 items-center gap-2 text-[14px] font-medium">
        {['Report_HMI', 'HMI_1 [TP1200 Comfort]', '画面', '根画面'].map((c, i) => (
          <span key={c} className="flex items-center gap-2">
            {i > 0 && <svg width="10" height="9"><path d="M2 0l5 4.500L2 9z" fill="#fff" /></svg>}
            <a href="#" className={i > 1 ? 'font-bold' : ''}><Txt>{c}</Txt></a>
          </span>
        ))}
      </nav>
      <div className="flex gap-[7px]">
        <button aria-label="Minimize"><svg width="11" height="12"><path d="M0 10h11" stroke="#fff" strokeWidth="3" /></svg></button>
        <button aria-label="Restore"><svg width="11" height="12"><path d="M0 4h8v7.500H0zM3 0h8v8H9V2.500H3z" fill="#fff" /></svg></button>
        <button aria-label="Maximize"><svg width="11" height="12"><path d="M0 0h11v2H0zM0 3h11v8.500H0z" fill="#fff" /></svg></button>
        <button aria-label="Close"><svg width="11" height="12"><path d="M1 1l9 10M10 1L1 11" stroke="#fff" strokeWidth="2" /></svg></button>
      </div>
    </div>
  )
}

function FormatToolbar() {
  return (
    <div className="flex h-[27px] shrink-0 items-center gap-2 bg-[#e9e9e9] pl-[5px]">
      <div className="flex h-[18px] border border-[#8a8a8a]">
        <input aria-label="Font" defaultValue="宋体" className="w-[94px] bg-white text-[12px]" />
        <button aria-label="Fonts" className="flex w-[18px] items-center justify-center border-l border-[#8a8a8a] bg-[#e4e4e4]">
          <Icon name="list" size={14} />
        </button>
      </div>
      <div className="relative flex h-[18px] border border-[#8a8a8a]">
        <select aria-label="Font size" className="w-9 appearance-none bg-white pl-0.5 text-[12px] leading-4">
          <option>17</option>
        </select>
        <span className="pointer-events-none absolute inset-y-0 right-0 flex w-[15px] items-center justify-center border-l border-[#8a8a8a] bg-[#dcdcdc]">
          <svg width="8" height="5"><path d="M0 0h8L4 5z" /></svg>
        </span>
      </div>
      <button className="w-4 text-[16px] leading-4 font-bold text-[#0b0b4a]">B</button>
      <button className="w-4 font-['Liberation_Serif'] text-[18px] leading-4 font-bold text-[#0b0b4a] italic">I</button>
      <button className="w-4 text-[15px] leading-4 font-semibold text-[#0b0b4a] underline">U</button>
      <button className="w-4 text-[16px] leading-4 font-semibold text-[#0b0b4a] line-through">S</button>
      <DropButton icon="fontUp" />
      <DropButton icon="alignLeft" />
      <Sep />
      <DropButton icon="fontColor" />
      <DropButton icon="fill" />
      <DropButton icon="brushBlue" />
      <Sep />
      <DropButton icon="lineWidth" />
      <DropButton icon="line" />
      <Sep />
      <DropButton icon="order" />
      <DropButton icon="rotate" />
      <DropButton icon="center" />
      <DropButton icon="distribute" disabled />
      <DropButton icon="sameWidth" disabled />
      <Sep />
      <ToolButton icon="formatBrush" />
      <DropButton icon="layerUp" />
      <ToolButton icon="zoomSel" />
    </div>
  )
}

// Device screen with its 8px snap grid, shown clipped by the editor viewport
function Canvas() {
  return (
    <div className="flex h-[180px] shrink-0">
      <div className="w-0.5 bg-[#d8d8d8]" />
      <div className="w-[65px] bg-[#787878]" />
      <div className="w-5 bg-[#70889b]" />
      <div className="relative min-w-0 flex-1 overflow-hidden bg-black">
        <div className="absolute top-[70px] right-0 bottom-0 left-[60px] bg-[#b8b8b8]">
          <div className="relative h-[60px] bg-[conic-gradient(at_1px_1px,transparent_75%,#222_0)] bg-size-[8px_8px]">
            <div className="absolute top-[5px] left-[11px] text-[19px] leading-6 font-extrabold text-[#009999]">SIEMENS</div>
            <div className="absolute top-[31px] left-[11px] text-[14px] leading-5">SIMATIC HMI</div>
            <div className="absolute top-[11px] right-[93px] left-[109px] flex h-[38px] items-center justify-between border border-[#9a9aaa] bg-white pr-2 pl-1">
              <span className="text-[24px] leading-8 text-[#31344a]">根画面</span>
              <svg width="18" height="11"><path d="M1 1h16L9 10z" fill="none" stroke="#556" strokeWidth="1.300" /></svg>
            </div>
            <div className="absolute top-[6px] left-[1198px] font-['Liberation_Mono'] text-[13px] leading-5 whitespace-nowrap">2000/12/31</div>
            <div className="absolute top-[36px] left-[1213px] font-['Liberation_Mono'] text-[13px] leading-5 whitespace-nowrap">10:59:39</div>
          </div>
          <div className="relative h-[52px] border-t border-black bg-[conic-gradient(at_1px_1px,transparent_75%,#222_0)] bg-size-[8px_8px]">
            <div className="absolute top-[35px] left-[37px] h-8 w-[158px] rounded-sm border border-[#9a9aaa] bg-linear-to-b from-[#f6f6f6] to-[#d0d0d0]">
              <div className="mt-[7px] ml-[5px] h-6 w-9 border-2 border-[#444]" />
            </div>
            <div className="absolute top-[46px] left-[340px] h-6 w-[162px] rounded-sm bg-[#4f5563]" />
            <div className="absolute top-[47px] left-[565px] h-6 w-[95px] rounded-sm bg-[#4f5563]" />
          </div>
        </div>
      </div>
      <div className="flex w-[21px] flex-col items-center bg-[#c2c2c2]">
        <ScrollButton dir="up" />
        <div className="mt-3 flex h-[23px] w-[19px] items-center justify-center border border-[#8c8c8c] bg-[#e6e6e6]"><GripV /></div>
        <div className="flex-1" />
        <ScrollButton dir="down" />
      </div>
    </div>
  )
}

function CanvasFooter() {
  return (
    <div className="flex h-[23px] shrink-0 bg-[#f0f0f0]">
      <div className="flex min-w-0 flex-1 items-center bg-[#c2c2c2]">
        <ScrollButton dir="left" />
        <div className="flex h-[22px] w-[87%] items-center justify-center border border-[#8c8c8c] bg-linear-to-b from-[#f4f4f4] to-[#d4d4d4]"><GripH /></div>
        <div className="flex-1" />
        <ScrollButton dir="right" />
      </div>
      <div className="relative ml-2 h-[19px]">
        <select aria-label="Zoom" className="h-[18px] w-[207px] appearance-none border border-[#8a8a8a] bg-white pl-[3px] text-[12px] leading-4">
          <option>100%</option>
        </select>
        <span className="pointer-events-none absolute top-0 right-0 flex h-[18px] w-[17px] items-center justify-center border border-[#8a8a8a] bg-[#dcdcdc]">
          <svg width="8" height="5"><path d="M0 0h8L4 5z" /></svg>
        </span>
      </div>
      <div className="relative mr-3.5 ml-5 flex h-[19px] w-[98px] flex-col justify-center">
        <input type="range" aria-label="Zoom level" defaultValue="33" className="absolute inset-0 m-0 w-full opacity-0" />
        <svg width="98" height="19" viewBox="0 0 98 19">
          <path d="M1 9.500h96" stroke="#444" />
          <path d="M1.500 15v3M7.900 15v3M14.300 15v3M20.700 15v3M27.100 15v3M33.500 15v3M39.900 15v3M46.300 15v3M52.700 15v3M59.100 15v3M65.500 15v3M71.900 15v3M78.300 15v3M84.700 15v3M91.100 15v3M96.500 15v3" stroke="#111" />
          <path d="M29.500 4.500h7v6L33 14.500l-3.500-4z" fill="#eee" stroke="#777" />
        </svg>
      </div>
      <button aria-label="Overview" className="flex w-[21px] items-start justify-center bg-white pt-0.5"><Icon name="layers" size={13} /></button>
    </div>
  )
}

function InspectorHeader() {
  return (
    <div className="flex h-[27px] shrink-0 items-end border-b-[3px] border-[#2d344c] bg-[#b2b2b2] pl-1.5">
      <h2 className="flex flex-1 self-start pt-0.5 text-[14px] leading-5 font-medium text-white"><Txt>按钮_3 [按钮]</Txt></h2>
      <button className="-mb-[3px] flex h-6 w-[75px] items-center gap-1 border-t-2 border-[#2d344c] bg-[#efefef] pb-1 pl-[3px]">
        <Icon name="props" /><span className="text-[16px] font-bold">属性</span>
      </button>
      <button className="ml-0.5 flex h-[21px] w-[80px] items-center gap-1 border border-b-0 border-[#777] bg-[#d6d6d6] pl-0.5 text-[#555]">
        <Icon name="info" /><span className="text-[16px] font-medium">信息</span><Icon name="infoYellow" />
      </button>
      <button className="ml-0.5 flex h-[21px] w-[75px] items-center gap-1 border border-b-0 border-[#777] bg-[#d6d6d6] pl-0.5 text-[#555]">
        <Icon name="diagnose" /><span className="text-[16px] font-medium">诊断</span>
      </button>
      <div className="mr-0.5 mb-1.5 ml-5 flex gap-1.5">
        <svg width="12" height="12"><path d="M0 4h8v8H0zM3 0h9v9H9V3H3z" fill="#fff" /></svg>
        <svg width="12" height="12"><path d="M0 1h11M0 4h11M0 7h11M0 10h11" stroke="#eee" strokeWidth="1.500" /></svg>
        <svg width="13" height="12"><path d="M0 3h12L6 9.500z" fill="#fff" /></svg>
      </div>
    </div>
  )
}

function InspectorBody() {
  return (
    <div className="relative flex min-h-0 flex-1 overflow-hidden bg-[#e9e9e9]">
      <ul className="mt-[33px] ml-0.5 flex w-[171px] shrink-0 flex-col bg-[#efefef]">
        {EVENTS.map((e) => (
          <li key={e} className="flex h-[19px] items-center border-b border-[#e6e6e6] pl-4">
            <span className="w-[17px]">{e === '释放' && <Icon name="event" />}</span>
            <button
              className={
                e === '释放'
                  ? 'border border-dotted border-[#222] bg-[#2f62d0] px-px text-[16px] leading-4 font-semibold text-white'
                  : 'px-0.5 text-[16px] leading-[18px]'
              }
            >
              {e}
            </button>
          </li>
        ))}
        <li className="flex-1 bg-[repeating-linear-gradient(#efefef_0_18px,#e6e6e6_18px_19px)]" />
      </ul>
      <div className="mt-[3px] flex w-[7px] shrink-0 flex-col border border-r-2 border-[#888] border-r-[#999] bg-[#d8d8d8]">
        <div className="h-[264px]" />
        <button aria-label="Collapse left" className="flex h-6 items-center justify-center border-y border-[#888] bg-[#b8b8b8]">
          <svg width="4" height="6"><path d="M4 0v6L0 3z" /></svg>
        </button>
        <button aria-label="Collapse right" className="mt-2.5 flex h-6 items-center justify-center border-y border-[#888] bg-[#b8b8b8]">
          <svg width="4" height="6"><path d="M0 0v6l4-3z" /></svg>
        </button>
      </div>
      <div className="mr-2.5 ml-[11px] flex min-w-0 flex-1 flex-col pb-[11px]">
        <div className="flex h-[33px] shrink-0 items-center gap-2">
          <ToolButton icon="moveUp" />
          <ToolButton icon="moveDown" />
          <Sep />
          <ToolButton icon="groupA" />
          <ToolButton icon="groupB" />
          <Sep />
          <ToolButton icon="x" />
        </div>
        <div className="min-h-0 flex-1 overflow-hidden bg-[#efefef]">
          <table className="w-full table-fixed border-collapse text-left">
            <colgroup>
              <col className="w-6" />
              <col />
              <col />
              <col className="w-[18px]" />
            </colgroup>
            <thead>
              <tr className="h-5 border-y border-[#b0b0b0] bg-[linear-gradient(#e4e4e4,#d8d8d8_50%,#c8c8c8_50%,#dedede)]">
                <th className="border-r border-[#a8a8a8]" />
                <th className="border-r border-[#a8a8a8]" />
                <th className="border-r border-[#a8a8a8]" />
                <th />
              </tr>
            </thead>
            <tbody>
              {FUNCS.map((f) => (
                <tr key={f.text} className="h-[19px] border-b border-white">
                  <td className="border-r border-[#b4b4b4] bg-[#cdcdcd]" />
                  <td className={f.level ? 'border-r border-white pl-[41px]' : 'pl-0.5'}>
                    <div className="flex h-[18px] items-center gap-2">
                      {!f.level && <Arrow state={f.open ? 'open' : undefined} />}
                      <Txt>{f.text}</Txt>
                    </div>
                  </td>
                  <td className={f.level ? 'border-r border-white pl-1' : 'pl-1'}>{f.value}</td>
                  <td />
                </tr>
              ))}
              {Array.from({ length: 23 }, (_, i) => (
                <tr key={i} className="h-[19px] border-b border-white">
                  <td className="border-r border-[#b4b4b4] bg-[#cdcdcd]" />
                  <td className="border-r border-white" />
                  <td className="border-r border-white" />
                  <td />
                </tr>
              ))}
            </tbody>
          </table>
        </div>
        <div className="flex shrink-0">
          <div className="w-6 border-r border-[#b4b4b4] bg-[#cdcdcd]" />
          <ScrollButton dir="left" />
          <div className="mx-0.5 flex flex-1 items-center justify-center border border-[#8c8c8c] bg-linear-to-b from-[#f0f0f0] to-[#d4d4d4]"><GripH /></div>
          <ScrollButton dir="right" />
        </div>
      </div>
      <div className="pointer-events-none absolute top-[92px] left-[300px] w-[400px] -rotate-30 text-center font-['Liberation_Sans','Noto_Sans_CJK_SC',sans-serif] whitespace-nowrap text-[#f5f5f5] [paint-order:stroke] [-webkit-text-stroke:3px_#e4e4e4]">
        <div className="text-[40px] leading-10 font-medium">西门子工业&nbsp; 技术论坛</div>
        <div className="text-[27px] leading-7">support.industry.siemens.com/cs</div>
      </div>
    </div>
  )
}

function Inspector() {
  return (
    <>
      <InspectorHeader />
      <div className="flex h-[25px] shrink-0 items-end gap-px border-b border-[#777] bg-[#cdcdcd] pl-1.5">
        {['属性', '动画', '事件', '文本'].map((t) => (
          <button
            key={t}
            className={
              t === '事件'
                ? '-mb-px h-[22px] w-[63px] border border-b-0 border-[#777] bg-linear-to-b from-white to-[#e9e9e9] pr-1.5 text-[16px] leading-[18px] font-bold'
                : 'h-[21px] w-[63px] border border-b-0 border-[#777] bg-linear-to-b from-[#e4e4e4] to-[#cfcfcf] pr-1.5 text-[16px] leading-[18px] font-medium text-[#555]'
            }
          >
            {t}
          </button>
        ))}
      </div>
      <InspectorBody />
    </>
  )
}

const SIDE_TABS = [
  { icon: 'toolbox', text: '工具箱', cls: 'h-[90px] bg-[#efefef] text-black' },
  { icon: 'animation', text: '动画', cls: 'h-[74px] bg-[#d8d8d8] text-[#555]' },
  { icon: 'layout', text: '布局', cls: 'h-[74px] bg-[#d8d8d8] text-[#555]' },
  { icon: 'instructions', text: '指令', cls: 'h-[74px] bg-[#d8d8d8] text-[#555]' },
  { icon: 'tasks', text: '任务', cls: 'h-[74px] bg-[#d8d8d8] text-[#555]' },
  { icon: 'book', text: '库', cls: 'h-[59px] bg-[#d8d8d8] text-[#555]' },
]

function SideTabs() {
  return (
    <aside className="w-6 shrink-0 bg-[#b2b2b2]">
      <div className="flex h-[30px] items-center pb-1.5 pl-1.5">
        <svg width="8" height="12"><path d="M7 0v12L1 6z" fill="#fff" /></svg>
      </div>
      <div className="flex flex-col gap-0.5">
        {SIDE_TABS.map((t) => (
          <button key={t.text} className={'flex w-[21px] flex-col items-center gap-1 border border-[#777] pt-0.5 ' + t.cls}>
            <Icon name={t.icon} />
            <span className="text-[15px] leading-4 font-medium [text-orientation:sideways] [writing-mode:vertical-rl]">{t.text}</span>
          </button>
        ))}
      </div>
    </aside>
  )
}

const OPEN_EDITORS = [
  { icon: 'portalOverview', text: '总览' },
  { icon: 'screen', text: '根画面', active: true },
  { icon: 'tagTable', text: 'Report_HMI' },
  { icon: 'recipe', text: '配方' },
]

function PortalBar() {
  return (
    <div className="flex h-[29px] shrink-0 items-center bg-[#1c1c1c] text-white">
      <button className="flex w-[181px] items-center gap-2.5 pl-[35px] text-[13px] font-semibold">
        <svg width="8" height="12"><path d="M7 0v12L1 6z" fill="#fff" /></svg>
        <Txt>Portal 视图</Txt>
      </button>
      <div className="flex flex-1 gap-[3px]">
        {OPEN_EDITORS.map((e) => (
          <button
            key={e.text}
            className={
              'flex h-5 w-[113px] items-center gap-1 pl-[3px] text-black ' + (e.active ? 'bg-white font-bold' : 'bg-[#c4c4c4]')
            }
          >
            <Icon name={e.icon} />
            <Txt small>{e.text}</Txt>
          </button>
        ))}
      </div>
      <button aria-label="Editors" className="mr-1.5 flex size-5 items-center justify-center bg-[#c4c4c4]"><Icon name="editors" /></button>
      <div className="flex h-full w-[312px] items-center gap-1.5 border-l border-[#555] pl-[3px]">
        <Icon name="ok" />
        <Txt small>项目 Report_HMI 已成功保存。</Txt>
      </div>
    </div>
  )
}

function Taskbar() {
  return (
    <footer className="relative flex h-12 shrink-0 items-center overflow-hidden border-t border-[#a8bccb] bg-[linear-gradient(90deg,#1f6ea8,#2f8cc8_8%,#55aede_22%,#3d9fd6_30%,#2c86cc_45%,#2273bd_65%,#1f62a8_79%,#1b4a80_81%,#1a4272)]">
      <svg className="absolute inset-0 size-full" preserveAspectRatio="none" viewBox="0 0 1920 48">
        <path d="M1302 0h20q36 18 66 48h-20q-30-28-66-48z" fill="#a9d4f5" opacity=".85" />
        <path d="M420 24q200-30 380 4q140 10 240-24" stroke="#6fc0ea" strokeWidth="5" opacity=".25" fill="none" />
        <path d="M836 0Q780 34 700 48M614 0l26 48" stroke="#7cc4ee" strokeWidth="5" opacity=".25" fill="none" />
        <path d="M0 0h1920v7H0z" fill="#7d8fa5" opacity=".7" />
      </svg>
      <button aria-label="Start" className="relative ml-[11px]">
        <svg width="44" height="44" viewBox="0 0 44 44">
          <circle cx="22" cy="22" r="20.500" fill="#16507e" stroke="#7fc3e6" strokeWidth="1.500" />
          <ellipse cx="22" cy="34" rx="14" ry="8" fill="#2ac4f0" opacity=".8" />
          <ellipse cx="22" cy="11" rx="15" ry="8" fill="#b8d8ea" opacity=".45" />
          <path d="M12 13q5-3 9-1l-2 9q-4-2-9 0z" fill="#f0602c" />
          <path d="M23 13q5 2 10-1l-2 9q-5 2-10 0z" fill="#8cc63a" />
          <path d="M9.500 23q5-2 9 0l-2 9q-4-2-9 0z" fill="#3a9ae8" />
          <path d="M20.500 24q5 2 10-1l-2 9q-5 2-10 0z" fill="#fcc42c" />
        </svg>
      </button>
      <button aria-label="Internet Explorer" className="relative ml-[30px]">
        <svg width="40" height="44" viewBox="0 0 40 44">
          <path d="M34 25H13q0 9 8 9 5 0 7-4h6q-3 10-14 10Q6 40 6 24T20 8q15 0 14 17zM13 20h14q0-7-7-7t-7 7z" fill="#5cc8f5" stroke="#2a8ed0" strokeWidth="1" />
          <path d="M4 39Q-2 32 14 16 30 0 37 4q2 3-1 8 0-6-5-5Q22 8 12 22 3 34 6 39z" fill="#f8d23c" stroke="#c89a10" strokeWidth=".7" />
        </svg>
      </button>
      <button aria-label="Explorer" className="relative ml-[30px]">
        <svg width="42" height="42" viewBox="0 0 42 42">
          <path d="M2 38V4q0-2 2-2h8l2 3h22q2 0 2 2v30z" fill="#f3d77a" stroke="#c9a640" />
          <path d="M6 6h10M18 8h10M28 10h8" stroke="#fff" strokeWidth="3" />
          <path d="M6 5h4M18 7h4" stroke="#2aa04a" strokeWidth="2" />
          <path d="M2 12h18l3-3h17v29H2z" fill="#fae9a4" stroke="#d8b850" />
          <path d="M6 40V27q0-3 3-3h24q3 0 3 3v13h-6v-8H12v8z" fill="#a6d8f0" stroke="#5aa4cc" />
        </svg>
      </button>
      <button aria-label="Media Player" className="relative ml-[30px]">
        <svg width="34" height="42" viewBox="0 0 34 42">
          <path d="M6 4h26v32L28 40z" fill="#6ab4dc" />
          <path d="M2 3h25v37L2 37z" fill="#9cd0ea" stroke="#5a9cc4" />
          <circle cx="14" cy="20" r="11" fill="#f07c1c" stroke="#fbb878" />
          <path d="M10 13l11 7-11 7z" fill="#fff" />
        </svg>
      </button>
      <button aria-label="Word" className="relative ml-5 flex h-[46px] w-[66px] items-center justify-center rounded-xs border border-white/70 bg-white/40">
        <svg width="40" height="42" viewBox="0 0 40 42">
          <path d="M4 10q0-8 8-8h24v36H4z" fill="#dce9fa" stroke="#3a68b8" strokeWidth="1.500" />
          <path d="M5 9h6l3 16 5-16h5l2 16 4-16h5l-6 23h-6l-3-14-5 14H10z" fill="#1a50b0" />
          <path d="M22 24l16 3-3 14-15-4z" fill="#fff" stroke="#9ab" />
          <path d="M24 29l11 2M23 32l11 2M22 35l11 2" stroke="#9ab" />
        </svg>
      </button>
      <button aria-label="TIA Portal" className="relative ml-1 flex h-[46px] w-[66px] items-center justify-center rounded-xs border border-white/80 bg-white/55">
        <span className="flex size-10 flex-col items-center bg-[#2c3142] text-[22px] leading-5 font-medium text-white">
          <span>TIA</span>
          <span className="text-[#a0a8dc]">V14</span>
        </span>
      </button>
      <div className="relative ml-auto flex items-center text-white">
        <span className="w-[25px] font-['Liberation_Serif'] text-[14px]">CH</span>
        <svg width="20" height="20" viewBox="0 0 20 20">
          <path d="M2 3l15-2 2 15-15 3z" fill="#f05a22" />
          <path d="M14.500 5Q7 4 6.500 7t6 3 .5 5q-4 1-7-.5" stroke="#fff" strokeWidth="2.500" fill="none" />
        </svg>
        <svg width="18" height="18" viewBox="0 0 18 18" className="ml-2">
          <circle cx="9" cy="9" r="8" fill="#1a30b8" stroke="#b8c8ea" strokeWidth="1.500" />
          <path d="M6 7q0-3 3-3t3 2.500q0 1.500-3 3.500v1.500M9 12.500v2" stroke="#fff" strokeWidth="1.700" fill="none" />
        </svg>
        <svg width="9" height="22" viewBox="0 0 9 22" className="ml-2.5">
          <path d="M2.500 1h6v4h-6zM.5 3.500h5v3h-5z" stroke="#fff" fill="none" />
          <path d="M1.500 16h6l-3 3z" fill="#fff" />
        </svg>
        <svg width="10" height="6" viewBox="0 0 10 6" className="ml-[13px]"><path d="M0 6l5-5 5 5z" fill="#fff" /></svg>
        <svg width="20" height="20" viewBox="0 0 20 20" className="ml-[18px]">
          <path d="M1 1h5v7H1zM3.500 8v9H12" stroke="#fff" strokeWidth="1.500" fill="none" />
          <path d="M7 4h12v9H7z" fill="#274a70" stroke="#fff" />
          <path d="M14 10l5 8.500H9z" fill="#fbd020" stroke="#a08000" strokeWidth=".6" />
          <path d="M14 12.500v3M14 16.500v1" stroke="#111" />
        </svg>
        <svg width="17" height="20" viewBox="0 0 17 20" className="ml-3">
          <path d="M1 7h3l5-5v16l-5-5H1z" fill="#fff" />
          <path d="M13 6q3 4 0 8" stroke="#c8d8e8" strokeWidth="1.300" fill="none" />
        </svg>
        <svg width="19" height="20" viewBox="0 0 19 20" className="ml-3">
          <path d="M1.500 1v18" stroke="#fff" strokeWidth="1.500" />
          <path d="M3 2q4-2 7 1t7 1v8q-4 1-7-1t-7-1z" fill="#fff" />
          <circle cx="13" cy="14" r="5" fill="#d82a20" />
          <path d="M11 12l4 4M15 12l-4 4" stroke="#fff" strokeWidth="1.500" />
        </svg>
        <div className="ml-5 w-[74px] text-center text-[16px] leading-[22px]">
          <div>3:38 AM</div>
          <div>7/2/2018</div>
        </div>
        <button aria-label="Show desktop" className="ml-3 h-[46px] w-[15px] border border-[#7d95ad] bg-white/15" />
      </div>
    </footer>
  )
}

export default function App() {
  return (
    <div className="flex h-screen min-h-[900px] flex-col overflow-hidden bg-[#cdcdcd] font-['Open_Sans','Noto_Sans_CJK_SC',sans-serif] text-[12px] leading-4 text-black">
      <TitleBar />
      <MenuAndToolbar />
      <div className="flex min-h-0 flex-1">
        <aside className="flex w-6 shrink-0 flex-col border-r border-[#1c2138] bg-[#b2b2b2]">
          <div className="h-[25px] border-b border-white" />
          <div className="flex h-[221px] items-center justify-center border-b border-white pr-1">
            <span className="rotate-180 text-[15px] leading-4 font-bold text-white [text-orientation:sideways] [writing-mode:vertical-rl]">可视化</span>
          </div>
        </aside>
        <ProjectTree />
        <main className="flex min-w-0 flex-1 flex-col border-r-2 border-l-3 border-[#1c2138]">
          <Crumbs />
          <div className="h-[3px] shrink-0 bg-[#f0f0f0]" />
          <div className="h-[25px] shrink-0 border-b border-[#777] bg-[#cdcdcd]" />
          <FormatToolbar />
          <Canvas />
          <CanvasFooter />
          <div className="h-[3px] shrink-0 bg-[#1c2138]" />
          <Inspector />
        </main>
        <SideTabs />
      </div>
      <PortalBar />
      <Taskbar />
    </div>
  )
}
